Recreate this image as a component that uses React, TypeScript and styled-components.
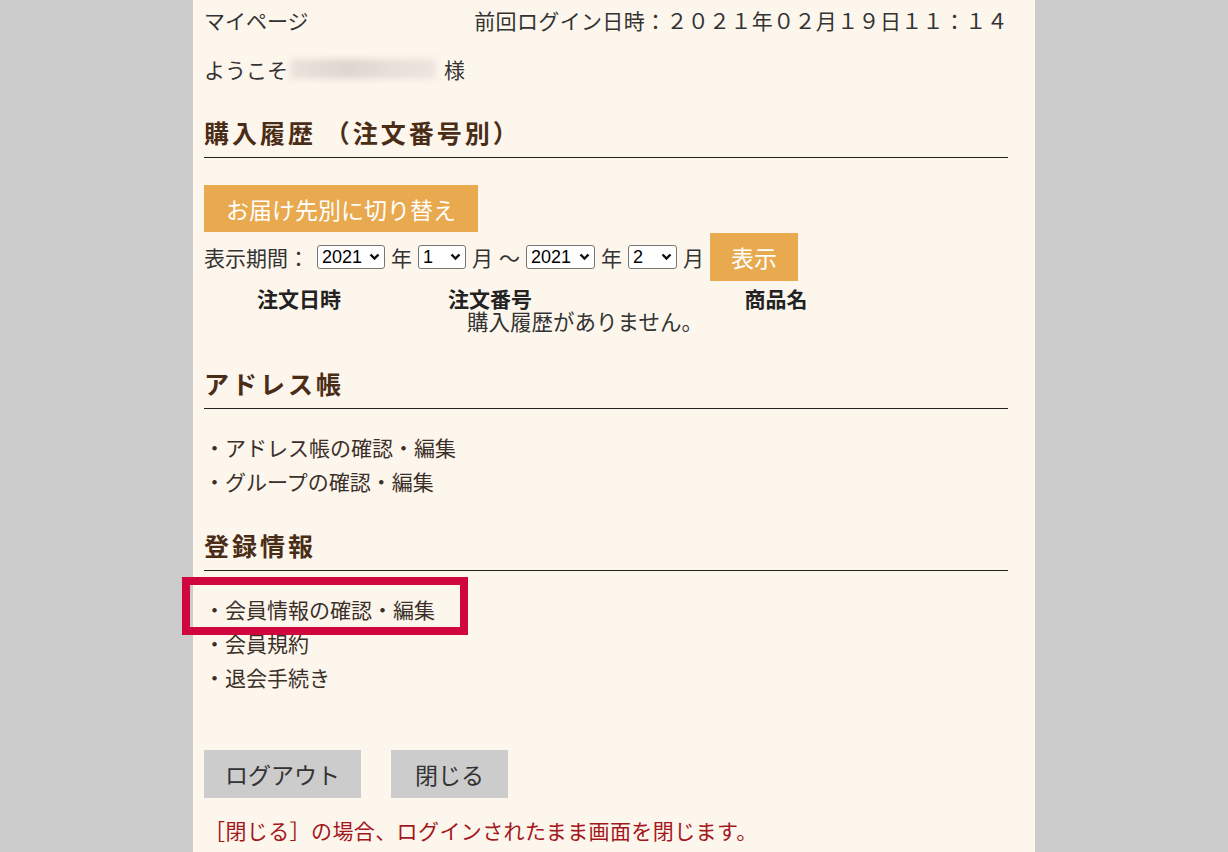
import * as React from 'react'
import styled, { createGlobalStyle } from 'styled-components'

const GlobalStyle = createGlobalStyle`
    body {
        margin: 0;
        background: #cccccc;
        font-family: 'Noto Sans CJK JP', 'Noto Sans', sans-serif;
        color: #333;
    }
`

const Page = styled.div`
    width: 842px;
    min-height: 852px;
    margin: 0 auto;
    box-sizing: border-box;
    padding: 5px 27px 0 11px;
    background: #fdf6ec;
    font-size: 21px;
`

const TopRow = styled.div`
    display: flex;
    justify-content: space-between;
    line-height: 30px;
`

const LastLogin = styled.span`
    letter-spacing: 0.35px;
`

const Welcome = styled.div`
    margin-top: 19px;
    line-height: 30px;
    display: flex;
    align-items: center;
`

const BlurName = styled.span`
    display: inline-block;
    width: 146px;
    height: 20px;
    margin: 0 8px 0 2px;
    background: linear-gradient(90deg, #e9e3dc, #ddd6cf 40%, #e6e0d9 70%, #ebe5de);
    filter: blur(3px);
`

const SectionHeading = styled.h2<{ $gap: number }>`
    margin: ${p => p.$gap}px 0 0;
    padding-bottom: 8px;
    border-bottom: 1px solid #222;
    font-size: 25px;
    font-weight: 700;
    letter-spacing: 3px;
    line-height: 34px;
    color: #4a2d17;
`

const OrangeButton = styled.button<{ $pad: number; $h: number }>`
    height: ${p => p.$h}px;
    padding: 0 ${p => p.$pad}px;
    border: none;
    background: #e8a94f;
    color: #fff;
    font-family: 'Noto Sans CJK JP', sans-serif;
    font-size: 23px;
    cursor: pointer;
`

const SwitchWrap = styled.div`
    margin-top: 27px;
`

const PeriodRow = styled.div`
    margin-top: 1px;
    display: flex;
    align-items: center;
    gap: 6px;
    height: 48px;
`

const PeriodLabel = styled.span`
    margin-right: 2px;
`

const SelectBox = styled.span`
    position: relative;
    display: inline-flex;
`

const Select = styled.select<{ $w: number }>`
    appearance: none;
    width: ${p => p.$w}px;
    height: 24px;
    box-sizing: border-box;
    padding: 0 0 0 4px;
    border: 1px solid #767676;
    border-radius: 3px;
    background: #fff;
    font-family: 'Liberation Sans', Arial, sans-serif;
    font-size: 18px;
    color: #000;
`

const Chevron = styled.svg`
    position: absolute;
    right: 5px;
    top: 8px;
    pointer-events: none;
`

const Table = styled.div`
    margin-top: 6px;
    width: 762px;
    display: grid;
    grid-template-columns: 190px 192px 380px;
    line-height: 22px;
`

const Th = styled.div`
    text-align: center;
    font-weight: 700;
    font-size: 21px;
    color: #222;
`

const Empty = styled.div`
    grid-column: 1 / 4;
    text-align: center;
    font-size: 21.5px;
    line-height: 23px;
`

const LinkList = styled.ul<{ $gap: number }>`
    list-style: none;
    margin: ${p => p.$gap}px 0 0;
    padding: 0;
`

const LinkItem = styled.li`
    position: relative;
    line-height: 34px;
    color: #3a3029;
`

const Highlight = styled.span`
    position: absolute;
    left: -22px;
    top: -15px;
    width: 286px;
    height: 58px;
    box-sizing: border-box;
    border: 8px solid #d0063f;
    pointer-events: none;
`

const ButtonRow = styled.div`
    margin-top: 56px;
    display: flex;
    gap: 30px;
`

const GreyButton = styled.button<{ $w: number }>`
    width: ${p => p.$w}px;
    height: 48px;
    padding: 0;
    border: none;
    background: #cccccc;
    color: #333;
    font-family: 'Noto Sans CJK JP', sans-serif;
    font-size: 23px;
    cursor: pointer;
`

const Note = styled.p`
    margin: 17px 0 0;
    line-height: 30px;
    letter-spacing: 0.4px;
    color: #a3161c;
`

const Drop = ({ w, value, options }: { w: number; value: string; options: string[] }) => (
    <SelectBox>
        <Select $w={w} defaultValue={value}>
            {options.map(o => (
                <option key={o} value={o}>{o}</option>
            ))}
        </Select>
        <Chevron width="11" height="8" viewBox="0 0 11 8">
            <path d="M1.5 1.5 L5.5 5.5 L9.5 1.5" fill="none" stroke="#111" strokeWidth="2.4" />
        </Chevron>
    </SelectBox>
)

const years = ['2019', '2020', '2021']
const months = Array.from({ length: 12 }, (_, i) => String(i + 1))

const App = () => {
    return (
        <>
            <GlobalStyle />
            <Page>
                <TopRow>
                    <span>マイページ</span>
                    <LastLogin>前回ログイン日時：２０２１年０２月１９日１１：１４</LastLogin>
                </TopRow>
                <Welcome>
                    ようこそ<BlurName />様
                </Welcome>

                <SectionHeading $gap={31}>購入履歴 （注文番号別）</SectionHeading>
                <SwitchWrap>
                    <OrangeButton $pad={22} $h={47}>お届け先別に切り替え</OrangeButton>
                </SwitchWrap>
                <PeriodRow>
                    <PeriodLabel>表示期間：</PeriodLabel>
                    <Drop w={68} value="2021" options={years} />
                    <span>年</span>
                    <Drop w={48} value="1" options={months} />
                    <span>月</span>
                    <span>～</span>
                    <Drop w={69} value="2021" options={years} />
                    <span>年</span>
                    <Drop w={49} value="2" options={months} />
                    <span>月</span>
                    <OrangeButton $pad={21} $h={48}>表示</OrangeButton>
                </PeriodRow>
                <Table>
                    <Th>注文日時</Th>
                    <Th>注文番号</Th>
                    <Th>商品名</Th>
                    <Empty>購入履歴がありません。</Empty>
                </Table>

                <SectionHeading $gap={34}>アドレス帳</SectionHeading>
                <LinkList $gap={21}>
                    <LinkItem>・アドレス帳の確認・編集</LinkItem>
                    <LinkItem>・グループの確認・編集</LinkItem>
                </LinkList>

                <SectionHeading $gap={30}>登録情報</SectionHeading>
                <LinkList $gap={21}>
                    <LinkItem>
                        ・会員情報の確認・編集
                        <Highlight />
                    </LinkItem>
                    <LinkItem>・会員規約</LinkItem>
                    <LinkItem>・退会手続き</LinkItem>
                </LinkList>

                <ButtonRow>
                    <GreyButton $w={157}>ログアウト</GreyButton>
                    <GreyButton $w={117}>閉じる</GreyButton>
                </ButtonRow>
                <Note>［閉じる］の場合、ログインされたまま画面を閉じます。</Note>
            </Page>
        </>
    )
}

export default App
